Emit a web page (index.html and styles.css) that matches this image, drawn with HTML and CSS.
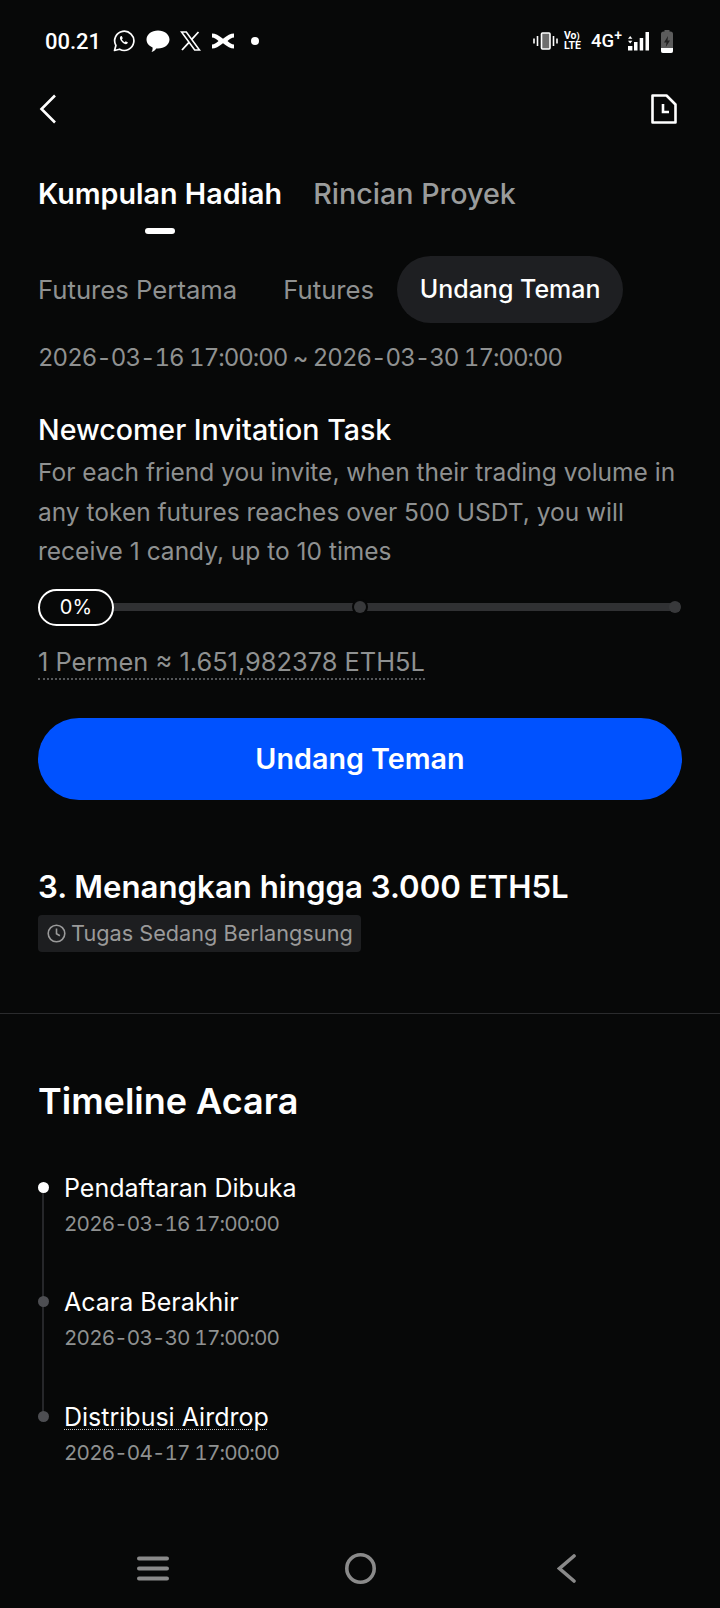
FILE: index.html
```html
<!DOCTYPE html>
<html lang="id">

<head>
    <meta charset="UTF-8">
    <meta name="viewport" content="width=device-width, initial-scale=1.0">
    <title>Kumpulan Hadiah</title>
    <link rel="stylesheet" href="styles.css">
</head>

<body>
    <div class="status-bar">
        <div class="status-left">
            <span class="clock">00.21</span>
            <svg class="st-icon" width="22" height="22" viewBox="0 0 22 22" fill="none">
                <path d="M1.5 20.5l1.4-5A9.6 9.6 0 1 1 6.6 19.2z" stroke="#fff" stroke-width="1.7" stroke-linejoin="round"/>
                <path d="M7.6 6.2c-1.2 1-.9 3 1 5.3 2 2.3 4.2 3.2 5.5 2.3l.9-1.2-2.3-1.300-1 .9c-1-.3-2.4-1.800-2.800-2.900l.9-1-1-2.400z" fill="#fff"/>
            </svg>
            <svg class="st-icon" width="24" height="23" viewBox="0 0 24 23">
                <path d="M12 .5c6.400 0 11.500 3.900 11.500 9s-5.100 9-11.500 9c-.6 0-1.200 0-1.800-.1-1 1.500-2.700 3.100-4.700 3.600.9-1.300 1.200-2.800 1.100-4.600C2.900 16 .5 13 .5 9.500c0-5.100 5.100-9 11.500-9z" fill="#fff"/>
            </svg>
            <svg class="st-icon" width="21" height="20" viewBox="0 0 21 20" fill="none">
                <path d="M1.500 1h4.800l13.200 18h-4.800z" stroke="#fff" stroke-width="1.600"/>
                <path d="M18.500 1l-7 7.600M9 11.300L2 19" stroke="#fff" stroke-width="1.800"/>
            </svg>
            <svg class="st-icon" width="22" height="16" viewBox="0 0 22 16">
                <path d="M0 .5c3.500 0 6.500 1.800 11 5.300C15.500 2.300 18.500.5 22 .5v4c-2.200.2-4 1.400-6.500 3.500 2.500 2.100 4.300 3.300 6.500 3.500v4c-3.500 0-6.500-1.800-11-5.300C6.500 13.700 3.500 15.500 0 15.500v-4c2.200-.2 4-1.400 6.500-3.500C4 5.900 2.200 4.700 0 4.500z" fill="#fff"/>
            </svg>
            <span class="st-dot"></span>
        </div>
        <div class="status-right">
            <svg class="ic-vibrate" width="25" height="18" viewBox="0 0 25 18" fill="none">
                <rect x="8.500" y="1" width="8.500" height="16" rx="1" fill="#6e6e6e" stroke="#fff" stroke-width="1.600"/>
                <path d="M4.500 4v10M1 6.500v5M20.500 4v10M24 6.500v5" stroke="#fff" stroke-width="1.600"/>
            </svg>
            <div class="volte"><span>Vo<i class="arc">)</i></span><span>LTE</span></div>
            <span class="net">4G<sup>+</sup></span>
            <svg class="ic-signal" width="21" height="20" viewBox="0 0 21 20">
                <path d="M2.200 5l2.200 2.700H0zM2.200 12.500L0 9.800h4.400z" fill="#fff"/>
                <rect x="0" y="15" width="4.400" height="4.500" fill="#fff"/>
                <rect x="6" y="11" width="3.500" height="8.500" fill="#fff"/>
                <rect x="11.700" y="7" width="3.500" height="12.500" fill="#fff"/>
                <rect x="17.500" y="1" width="3.500" height="18.500" fill="#fff"/>
            </svg>
            <svg width="12" height="23" viewBox="0 0 12 23">
                <path d="M3.500 0h5v1.500h1A2.500 2.500 0 0 1 12 4v17a2 2 0 0 1-2 2H2a2 2 0 0 1-2-2V4a2.500 2.500 0 0 1 2.500-2.500h1z" fill="#5c5c5c"/>
                <path d="M0 18h12v3a2 2 0 0 1-2 2H2a2 2 0 0 1-2-2z" fill="#fff"/>
                <path d="M7 6L3 12.500h2.500L4.800 17 9 10.500H6.500z" fill="#222"/>
            </svg>
        </div>
    </div>

    <header class="top-bar">
        <svg width="18" height="30" viewBox="0 0 18 30" fill="none">
            <path d="M16 1.500L2.500 15 16 28.500" stroke="#fff" stroke-width="2.600"/>
        </svg>
        <svg width="26" height="30" viewBox="0 0 26 30" fill="none">
            <path d="M1.500 1.500h14l9 9v18h-23z" stroke="#fff" stroke-width="2.600" stroke-linejoin="round"/>
            <path d="M12 10v8h6" stroke="#fff" stroke-width="2.600"/>
        </svg>
    </header>

    <main class="content">
        <div class="main-tabs">
            <div class="main-tab current">Kumpulan Hadiah</div>
            <div class="main-tab">Rincian Proyek</div>
        </div>
        <div class="tab-line"></div>

        <div class="sub-tabs">
            <div class="sub-tab">Futures Pertama</div>
            <div class="sub-tab">Futures</div>
            <div class="sub-tab current">Undang Teman</div>
        </div>

        <p class="period">2026-03-16 17:00:00 ~ 2026-03-30 17:00:00</p>

        <h3 class="task-title">Newcomer Invitation Task</h3>
        <p class="task-desc">For each friend you invite, when their trading volume in any token futures reaches over 500 USDT, you will receive 1 candy, up to 10 times</p>

        <div class="progress">
            <div class="progress-pill">0%</div>
            <div class="progress-track">
                <span class="track-dot"></span>
                <span class="track-dot"></span>
            </div>
        </div>

        <div class="rate"><span class="rate-text">1 Permen ≈ 1.651,982378 ETH5L</span></div>

        <button class="invite-btn">Undang Teman</button>

        <h2 class="win-title">3. Menangkan hingga 3.000 ETH5L</h2>
        <div class="status-tag">
            <svg width="19" height="19" viewBox="0 0 19 19" fill="none">
                <circle cx="9.500" cy="9.500" r="8.300" stroke="#9a9a9a" stroke-width="1.600"/>
                <path d="M9.500 4.500v5.300l3.400 2" stroke="#9a9a9a" stroke-width="1.600"/>
            </svg>
            Tugas Sedang Berlangsung
        </div>
    </main>

    <hr class="divider">

    <section class="timeline-wrap">
        <h2 class="timeline-title">Timeline Acara</h2>
        <ul class="timeline">
            <li class="done">
                <div class="tl-name">Pendaftaran Dibuka</div>
                <div class="tl-date">2026-03-16 17:00:00</div>
            </li>
            <li>
                <div class="tl-name">Acara Berakhir</div>
                <div class="tl-date">2026-03-30 17:00:00</div>
            </li>
            <li>
                <div class="tl-name"><span class="dotted">Distribusi Airdrop</span></div>
                <div class="tl-date">2026-04-17 17:00:00</div>
            </li>
        </ul>
    </section>

    <nav class="nav-bar">
        <svg width="32" height="25" viewBox="0 0 32 25" fill="none">
            <path d="M2 2.500h28M2 12.500h28M2 22.500h28" stroke="#8a8a8a" stroke-width="4" stroke-linecap="round"/>
        </svg>
        <svg width="31" height="31" viewBox="0 0 31 31" fill="none">
            <circle cx="15.500" cy="15.500" r="13.700" stroke="#8a8a8a" stroke-width="3.600"/>
        </svg>
        <svg class="nav-back" width="19" height="29" viewBox="0 0 19 29" fill="none">
            <path d="M17 2L2.500 14.500 17 27" stroke="#8a8a8a" stroke-width="3.600" stroke-linecap="round"/>
        </svg>
    </nav>
</body>

</html>
```

FILE: styles.css
```css
* {
    box-sizing: border-box;
    margin: 0;
    padding: 0;
}

body {
    width: 720px;
    height: 1608px;
    overflow: hidden;
    background-color: #070808;
    color: #fff;
    font-family: Inter, "Noto Sans", sans-serif;
}

/* status bar */
.status-bar {
    height: 82px;
    padding: 0 47px 0 45px;
    display: flex;
    justify-content: space-between;
    align-items: center;
}

.status-left,
.status-right {
    display: flex;
    align-items: center;
}

.clock {
    font-family: Roboto, sans-serif;
    font-size: 22px;
    font-weight: 500;
    margin-right: 12px;
}

.st-icon {
    margin-right: 10.500px;
}

.st-dot {
    width: 8px;
    height: 8px;
    margin-left: 6.500px;
    border-radius: 50%;
    background-color: #fff;
}

.ic-vibrate {
    margin-right: 6px;
}

.volte {
    width: 18px;
    margin-right: 9px;
    display: flex;
    flex-direction: column;
    font-family: Roboto, sans-serif;
    font-size: 10.500px;
    font-weight: 700;
    line-height: 10px;
}

.volte .arc {
    font-style: normal;
    font-size: 9px;
}

.net {
    width: 29px;
    margin-right: 8px;
    font-family: Roboto, sans-serif;
    font-size: 18.500px;
    font-weight: 500;
    white-space: nowrap;
}

.net sup {
    font-size: 14px;
    line-height: 0;
}

.ic-signal {
    margin-right: 12px;
}

/* top bar */
.top-bar {
    height: 52px;
    padding: 2px 43px 0 39px;
    display: flex;
    justify-content: space-between;
    align-items: center;
}

.content {
    padding: 0 38px;
}

.main-tabs {
    margin-top: 40px;
    display: flex;
    gap: 31px;
}

.main-tab {
    font-size: 28.700px;
    line-height: 40px;
    font-weight: 500;
    color: #9a9c9c;
}

.main-tab.current {
    font-weight: 600;
    color: #fff;
}

.tab-line {
    width: 30px;
    height: 6px;
    margin: 14px 0 0 107px;
    border-radius: 3px;
    background-color: #fff;
}

.sub-tabs {
    margin-top: 22px;
    display: flex;
    align-items: center;
}

.sub-tab {
    height: 67px;
    line-height: 67px;
    font-size: 25.700px;
    color: #8f9191;
    margin-right: 23px;
}

.sub-tab:first-child {
    margin-right: 46px;
}

.sub-tab.current {
    margin: 0;
    padding: 0 22.500px;
    border-radius: 34px;
    background-color: #1e1f22;
    color: #fff;
    font-size: 25px;
    font-weight: 500;
}

.period {
    margin-top: 18px;
    font-size: 24px;
    line-height: 34px;
    color: #8f9191;
    font-variant-numeric: tabular-nums;
    letter-spacing: -1px;
}

.task-title {
    margin-top: 36px;
    font-size: 28.600px;
    line-height: 38px;
    font-weight: 500;
}

.task-desc {
    font-size: 24.500px;
    line-height: 39.500px;
    color: #8f9191;
    margin-top: 4px;
}

.progress {
    margin-top: 17px;
    display: flex;
    align-items: center;
    height: 37px;
}

.progress-pill {
    width: 76px;
    height: 37px;
    border: 2px solid #fff;
    border-radius: 19px;
    background-color: #070808;
    text-align: center;
    line-height: 33px;
    font-size: 20px;
    flex-shrink: 0;
}

.progress-track {
    flex: 1;
    height: 8px;
    margin-right: 2px;
    background-color: #303133;
    display: flex;
    justify-content: space-between;
    align-items: center;
    padding-left: 240px;
}

.track-dot {
    width: 12px;
    height: 12px;
    border-radius: 50%;
    background-color: #38393b;
    box-shadow: 0 0 0 2px #070808;
}

.track-dot:last-child {
    margin-right: -1px;
    box-shadow: none;
}

.rate {
    margin-top: 19px;
}

.rate-text {
    display: inline-block;
    font-size: 25.400px;
    line-height: 33px;
    color: #8f9191;
    border-bottom: 2px dotted #55575a;
}

.invite-btn {
    display: block;
    width: 644px;
    height: 82px;
    margin-top: 38px;
    border: none;
    border-radius: 41px;
    background-color: #0052ff;
    color: #fff;
    font-family: Inter, sans-serif;
    font-size: 28.700px;
    font-weight: 600;
}

.win-title {
    margin-top: 66px;
    font-size: 31.200px;
    line-height: 42px;
    font-weight: 600;
}

.status-tag {
    width: 323px;
    height: 37px;
    margin-top: 7px;
    padding-left: 9px;
    display: flex;
    align-items: center;
    gap: 5px;
    border-radius: 4px;
    background-color: #1d1e20;
    color: #9a9a9a;
    font-size: 21.700px;
}

.divider {
    margin-top: 61px;
    border: none;
    border-top: 1px solid #2a2b2d;
}

.timeline-wrap {
    padding: 0 38px;
}

.timeline-title {
    margin-top: 62px;
    font-size: 36px;
    line-height: 50px;
    font-weight: 600;
}

.timeline {
    list-style: none;
    margin-top: 44px;
}

.timeline li {
    position: relative;
    height: 114.500px;
    padding-left: 26px;
}

/* connector and marker */
.timeline li::before {
    content: "";
    position: absolute;
    left: 4px;
    top: 20px;
    width: 2px;
    height: 114px;
    background-color: #26272a;
}

.timeline li:last-child::before {
    display: none;
}

.timeline li::after {
    content: "";
    position: absolute;
    left: 0;
    top: 12px;
    width: 11px;
    height: 11px;
    border-radius: 50%;
    background-color: #4d4e52;
}

.timeline li.done::after {
    background-color: #fff;
}

.tl-name {
    font-size: 25px;
    line-height: 36px;
}

.dotted {
    text-decoration: underline dotted #bbb 1px;
    text-underline-offset: 3px;
}

.tl-date {
    margin-top: 3px;
    font-size: 20.700px;
    line-height: 30px;
    color: #8f9191;
    font-variant-numeric: tabular-nums;
    letter-spacing: -0.850px;
}

.nav-bar {
    position: absolute;
    left: 0;
    top: 1553px;
    width: 720px;
    height: 31px;
    padding-left: 137px;
    display: flex;
    align-items: center;
    gap: 176px;
}

.nav-back {
    margin-left: 5px;
}
```
